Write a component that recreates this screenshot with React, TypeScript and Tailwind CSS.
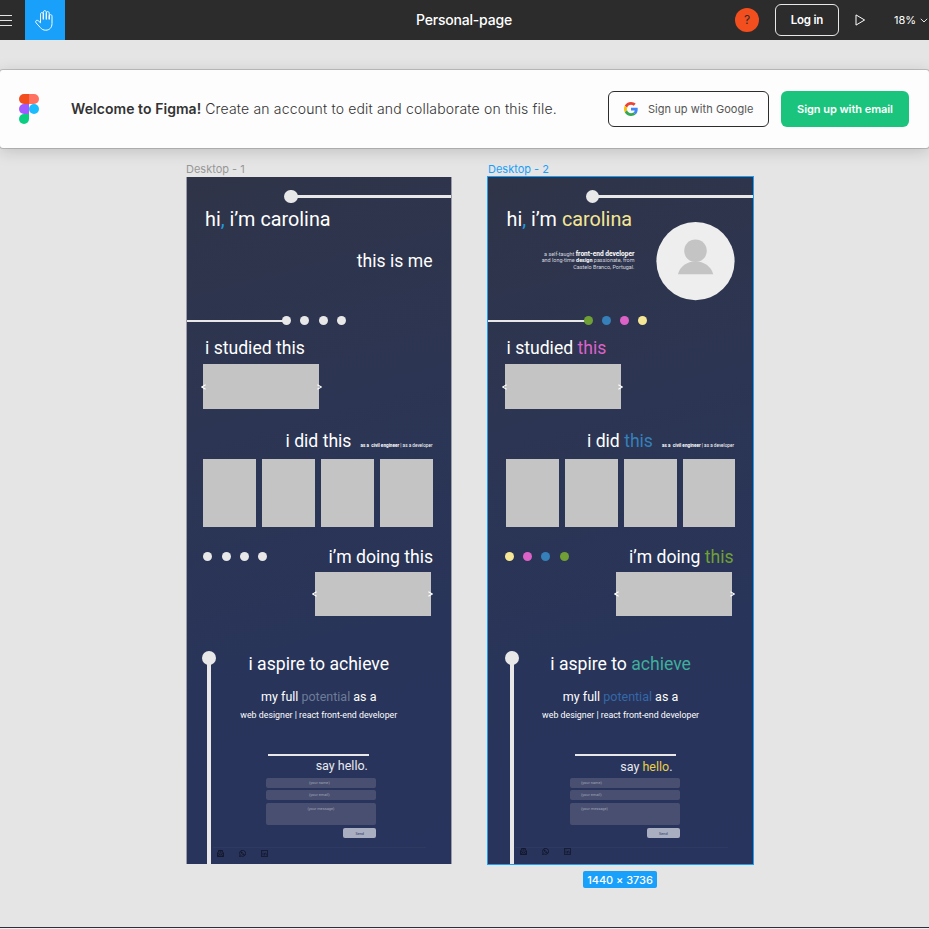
import type { ReactNode } from 'react';

type Theme = 'plain' | 'colour';

const grey = 'bg-[#e8e8e8]';
const title = 'text-[17.6px] leading-[18px] whitespace-pre';

function Dots({ fills }: { fills: string[] }) {
  return (
    <div className="flex gap-[9.2px]">
      {fills.map((f, i) => (
        <span key={i} className={`size-[9px] rounded-full ${f}`} />
      ))}
    </div>
  );
}

function Carousel() {
  return (
    <div className="relative flex h-[44.5px] w-[116px] items-center justify-between bg-[#c4c4c4]">
      <svg className="-ml-[2.5px] h-[6px] w-[5px]" viewBox="0 0 5 6" fill="none" stroke="#fff" strokeWidth="1.2">
        <path d="M4.6 .8 .7 3l3.9 2.2" />
      </svg>
      <svg className="-mr-[2.5px] h-[6px] w-[5px]" viewBox="0 0 5 6" fill="none" stroke="#fff" strokeWidth="1.2">
        <path d="M.4 .8 4.3 3 .4 5.2" />
      </svg>
    </div>
  );
}

function Socials({ className }: { className: string }) {
  return (
    <div className={`flex gap-[15px] text-[#12162a] ${className}`}>
      <svg className="size-[7px]" viewBox="0 0 14 14" fill="none" stroke="currentColor" strokeWidth="1.8">
        <path d="M1 6v7h12V6M1 6l6 4 6-4M1 6l2-2V1h8v3l2 2M5 3.5h4M5 5.800h4M1 13l5-4M13 13 8 9" />
      </svg>
      <svg className="size-[7px]" viewBox="0 0 14 14" fill="none" stroke="currentColor" strokeWidth="1.8">
        <path d="M1 13l1-3.400A6 6 0 1 1 4.500 12z" />
        <path d="M4.500 4c0 3 2.500 5.500 5.500 5.500L10 8 8.500 7.500M4.500 4 6 4l.5 2" />
      </svg>
      <svg className="size-[7px] opacity-80" viewBox="0 0 14 14" fill="none" stroke="currentColor" strokeWidth="1.8">
        <rect x="1" y="1" width="12" height="12" />
        <path d="M4 6v5M4 3v1.500M7 6v5M7 8c0-2.500 3.500-2.500 3.500 0v3" />
      </svg>
    </div>
  );
}

function Field({ className, children }: { className: string; children: ReactNode }) {
  return <div className={`rounded-[2px] bg-[#484f70] text-[3.9px] leading-none text-[#a0a5b7] ${className}`}>{children}</div>;
}

function Artboard({ theme }: { theme: Theme }) {
  const c = theme === 'colour';
  const dots = c ? ['bg-[#70a035]', 'bg-[#3680ba]', 'bg-[#dd62c8]', 'bg-[#f5e795]'] : [grey, grey, grey, grey];
  return (
    <article className="flex h-[687px] flex-col overflow-hidden bg-[linear-gradient(165deg,#2f3448_0%,#2c3553_35%,#28345a_70%,#28345d_100%)] font-[Roboto,sans-serif] text-white">
      <div className={`flex h-[26px] items-end ${c ? 'pl-[98px]' : 'pl-[97.3px]'}`}>
        <span className={`size-[13.4px] shrink-0 rounded-full ${grey}`} />
        <span className={`mb-[5px] -ml-1 h-[3.5px] flex-1 ${grey}`} />
      </div>

      <section className={`flex h-[113.3px] justify-between pt-[7px] pr-[18.5px] ${c ? 'pl-[18.5px]' : 'pl-[18px]'}`}>
        <div className="flex w-[128px] flex-col">
          <h1 className="text-[19.8px] leading-[20px] whitespace-pre">
            hi<span className="text-[#1e9be0]">,</span> i’m <span className={c ? 'text-[#f5e795]' : ''}>carolina</span>
          </h1>
          {c && (
            <p className="mt-[20.7px] text-right text-[5.45px] leading-[6.6px] whitespace-pre text-[#d5d7df]">
              a self-taught <b className="text-[6.6px] font-bold text-white">front-end developer</b>
              {'\n'}and long-time <b className="font-bold text-white">design</b> passionate, from{'\n'}Castelo Branco, Portugal.
            </p>
          )}
        </div>
        {c ? (
          <svg className="mt-[11.5px] size-[79px] shrink-0" viewBox="0 0 79 79">
            <circle cx="39.5" cy="39.2" r="39.1" fill="#eee" />
            <circle cx="39.5" cy="28.8" r="11.3" fill="#c4c4c4" />
            <path d="M22 52.2c2-8 9-12.7 17.5-12.700S55 44.200 57.200 52.200z" fill="#c4c4c4" />
          </svg>
        ) : (
          <h2 className={`mt-[42px] ${title}`}>this is me</h2>
        )}
      </section>

      <div className="flex items-center">
        <span className={`-mr-1 h-[2.5px] ${grey} ${c ? 'w-[99.8px]' : 'w-[99.3px]'}`} />
        <Dots fills={dots} />
      </div>

      <section className={`mt-[13.7px] ${c ? 'pl-[18.5px]' : 'pl-[18px]'}`}>
        <h2 className={title}>
          i studied <span className={c ? 'text-[#dd62c8]' : ''}>this</span>
        </h2>
        <div className={`mt-[7.5px] ${c ? '-ml-[1.7px]' : '-ml-[2px]'}`}>
          <Carousel />
        </div>
      </section>

      <section className={`mt-[23px] ${c ? 'pl-[18px]' : 'pl-[16.2px]'}`}>
        <div className={`flex items-end justify-end ${c ? 'pr-[19px]' : 'pr-[18.5px]'}`}>
          <h2 className={title}>
            i did <span className={c ? 'text-[#3680ba]' : ''}>this</span>
          </h2>
          <p className="mb-[2px] ml-[9px] text-[4.65px] leading-[5px] whitespace-pre">
            <b>as a  civil engineer</b> | as a developer
          </p>
        </div>
        <div className="mt-[9.4px] flex gap-[6.1px]">
          {[0, 1, 2, 3].map((i) => (
            <div key={i} className="h-[67.4px] w-[52.8px] bg-[#c4c4c4]" />
          ))}
        </div>
      </section>

      <section className={`mt-[21.2px] flex flex-col ${c ? 'pr-[19.5px] pl-[17px]' : 'pr-[18px] pl-[16.4px]'}`}>
        <div className="flex items-center justify-between">
          <div className="mb-px">
            <Dots fills={c ? [...dots].reverse() : dots} />
          </div>
          <h2 className={title}>
            i’m doing <span className={c ? 'text-[#70a035]' : ''}>this</span>
          </h2>
        </div>
        <div className={`mt-[6px] self-end ${c ? 'mr-[1.5px]' : 'mr-[2.4px]'}`}>
          <Carousel />
        </div>
      </section>

      <section className={`mt-[35px] flex flex-1 ${c ? 'pl-[17.2px]' : 'pl-[15.400px]'}`}>
        <div className="flex w-[13.4px] shrink-0 flex-col items-center">
          <span className={`size-[13.4px] rounded-full ${grey}`} />
          <span className={`-mt-1 w-[3.5px] flex-1 ${grey}`} />
        </div>

        <div className={`flex w-[213px] flex-col pt-[3.5px] ${c ? '-ml-[4px]' : '-ml-[3px]'}`}>
          <div className="flex flex-col items-center pr-px">
            <h2 className={title}>
              i aspire to <span className={c ? 'text-[#3fae9c]' : ''}>achieve</span>
            </h2>
            <h3 className="mt-[17px] text-[12.5px] leading-[13px] whitespace-pre">
              my full <span className={c ? 'text-[#3568a8]' : 'text-[#6d7c98]'}>potential</span> as a
            </h3>
            <p className="mt-[8px] text-[8.82px] leading-[9px] whitespace-pre">web designer | react front-end developer</p>
          </div>

          <div className={`mt-[33.6px] flex w-[110px] flex-col ${c ? 'ml-[55.4px]' : 'ml-[53.600px]'}`}>
            <span className={`h-[2.5px] w-[101px] ${grey} ${c ? 'ml-[5px]' : 'ml-[1.6px]'}`} />
            <h3 className={`h-[21.9px] self-end text-[12.5px] leading-[13px] text-[#e9eaef] ${c ? 'mr-[7.5px] pt-[4px]' : 'mr-[8.5px] pt-[3px]'}`}>
              say <span className={c ? 'text-[#e8d04a]' : ''}>hello</span>.
            </h3>
            <Field className={`h-[10px] pt-[3.5px] ${c ? 'pl-[11px]' : 'pl-[42.5px]'}`}>(your name)</Field>
            <Field className={`mt-[2px] h-[10px] pt-[3.5px] ${c ? 'pl-[11px]' : 'pl-[42.5px]'}`}>(your email)</Field>
            <Field className={`mt-[3px] h-[22px] pt-[4.5px] ${c ? 'pl-[11px]' : 'pl-[41px]'}`}>(your message)</Field>
            <span className="mt-[3px] flex h-[10px] w-[33.3px] items-center justify-center self-end rounded-[2px] bg-[#a9aec1] pt-px text-[3.8px] leading-none text-[#28345d]">
              Send
            </span>
          </div>

          <footer className="mt-[9px] border-t border-[#2e3a61]">
            <Socials className={c ? 'pt-[.5px] pl-[5.5px]' : 'pt-[2px] pl-[4px]'} />
          </footer>
        </div>
      </section>
    </article>
  );
}

export default function App() {
  return (
    <div className="flex h-[929px] w-[929px] flex-col overflow-hidden bg-[#e5e5e5] font-[Inter,sans-serif]">
      <header className="flex h-10 shrink-0 items-center bg-[#2c2c2c] text-white">
        <div className="flex w-[25px] flex-col gap-1">
          <span className="h-px w-3 bg-[#e4e4e4]" />
          <span className="h-px w-3 bg-[#e4e4e4]" />
          <span className="h-px w-3 bg-[#e4e4e4]" />
        </div>
        <div className="flex size-10 items-center justify-center bg-[#18a0fb]">
          <svg className="mr-[1.500px] h-[21px] w-[19px]" viewBox="0 0 19 21" fill="none" stroke="#fff" strokeLinejoin="round" strokeLinecap="round">
            <path d="M5.500 11.500V4.200c0-2.200 2.800-2.200 2.800 0V9M8.300 9V2.300c0-2.200 3-2.200 3 0V9M11.300 9V3.200c0-2.100 2.900-2.100 2.900 0V9M14.200 9V6.200c0-2 2.800-2 2.800 0v7.300c0 4-2.500 6.700-6.200 6.700-2.400 0-4-.8-5.500-2.700L1.200 13C-.3 11 1.700 9.500 3.300 10.800l2.200 2v-2" />
          </svg>
        </div>
        <h1 className="flex-1 pb-[1.5px] pl-[351px] text-[14px] font-medium tracking-[-0.2px] whitespace-nowrap">Personal-page</h1>
        <span className="flex size-6 shrink-0 items-center justify-center rounded-full bg-[#f24e1e] text-[12px] text-[#2c2c2c]">?</span>
        <button className="ml-4 h-8 w-16 shrink-0 rounded-[6px] border border-[#e8e8e8] pt-px text-[11.5px] font-semibold tracking-[-0.2px]">Log in</button>
        <svg className="ml-4 h-3 w-[11px] shrink-0" viewBox="0 0 11 12" fill="none" stroke="#fff">
          <path d="M1 .9v10.200L9.600 6z" />
        </svg>
        <span className="ml-[28px] w-[22px] text-[11px] whitespace-nowrap">18%</span>
        <svg className="mr-px ml-[4px] h-[5px] w-[8px] shrink-0" viewBox="0 0 8 5" fill="none" stroke="#e4e4e4">
          <path d="M.8.8 4 4 7.200.8" />
        </svg>
      </header>

      <section className="relative z-10 mt-[30px] flex h-[78px] shrink-0 items-center rounded-[3px] bg-[#fdfdfd] shadow-[0_0_0_1px_rgba(0,0,0,0.16),0_3px_16px_rgba(0,0,0,0.17)]">
        <svg className="ml-[19px] h-[30px] w-5" viewBox="0 0 20 30">
          <path d="M5 0h5v10H5A5 5 0 0 1 5 0z" fill="#f24e1e" />
          <path d="M10 0h5a5 5 0 0 1 0 10h-5z" fill="#ff7262" />
          <path d="M5 10h5v10H5a5 5 0 0 1 0-10z" fill="#a259ff" />
          <circle cx="15" cy="15" r="5" fill="#1abcfe" />
          <path d="M5 20h5v5a5 5 0 1 1-5-5z" fill="#0acf83" />
        </svg>
        <p className="mb-[2px] ml-8 text-[14px] whitespace-nowrap text-[#333]">
          <b className="font-semibold tracking-[0.06px]">Welcome to Figma!</b>{' '}
          <span className="font-light tracking-[0.17px]">Create an account to edit and collaborate on this file.</span>
        </p>
        <button className="mr-3 ml-auto flex h-9 w-[161px] items-center rounded-[6px] border border-[#2c2c2c] pl-[15px] text-[11px] whitespace-nowrap text-[#555]">
          <svg className="mr-[10px] size-[14px]" viewBox="0 0 48 48">
            <path fill="#ea4335" d="M24 9.500c3.540 0 6.710 1.220 9.210 3.600l6.850-6.850C35.900 2.380 30.470 0 24 0 14.620 0 6.510 5.380 2.560 13.220l7.980 6.190C12.430 13.720 17.740 9.500 24 9.500z" />
            <path fill="#4285f4" d="M46.980 24.550c0-1.570-.15-3.090-.38-4.550H24v9.020h12.940c-.58 2.960-2.260 5.480-4.780 7.180l7.730 6c4.510-4.180 7.090-10.360 7.090-17.650z" />
            <path fill="#fbbc05" d="M10.530 28.590c-.48-1.450-.76-2.990-.76-4.590s.27-3.140.76-4.590l-7.980-6.190C.92 16.460 0 20.120 0 24s.92 7.540 2.560 10.780z" />
            <path fill="#34a853" d="M24 48c6.480 0 11.930-2.130 15.890-5.810l-7.730-6c-2.150 1.450-4.920 2.300-8.160 2.300-6.260 0-11.570-4.220-13.470-9.910l-7.980 6.190C6.510 42.620 14.620 48 24 48z" />
          </svg>
          <span className="tracking-[0.05px]">Sign up with Google</span>
        </button>
        <button className="mr-5 h-9 w-32 rounded-[6px] bg-[#1bc47d] text-[11px] font-semibold tracking-[-0.05px] whitespace-nowrap text-white">Sign up with email</button>
      </section>

      <main className="flex flex-1 items-start gap-[36px] border-b border-[#2b303c] pt-[14px] pl-[186px]">
        <div className="w-[266px]">
          <p className="h-[15px] text-[11px] leading-[14px] text-[#979797]">Desktop - 1</p>
          <div className="border-x border-[#9a9da8]">
            <Artboard theme="plain" />
          </div>
        </div>
        <div className="flex w-[265px] flex-col items-center">
          <p className="h-[15px] self-start text-[11px] leading-[14px] text-[#18a0fb]">Desktop - 2</p>
          <div className="w-full outline-[1.3px] outline-[#18a0fb]">
            <Artboard theme="colour" />
          </div>
          <p className="mt-[7px] mr-px flex h-[17px] w-[74px] items-center justify-center rounded-[2px] bg-[#18a0fb] pt-px text-[11px] font-medium tracking-[-0.05px] whitespace-nowrap text-white">
            1440 × 3736
          </p>
        </div>
      </main>
      <span className="h-px shrink-0 bg-[#eee]" />
    </div>
  );
}
